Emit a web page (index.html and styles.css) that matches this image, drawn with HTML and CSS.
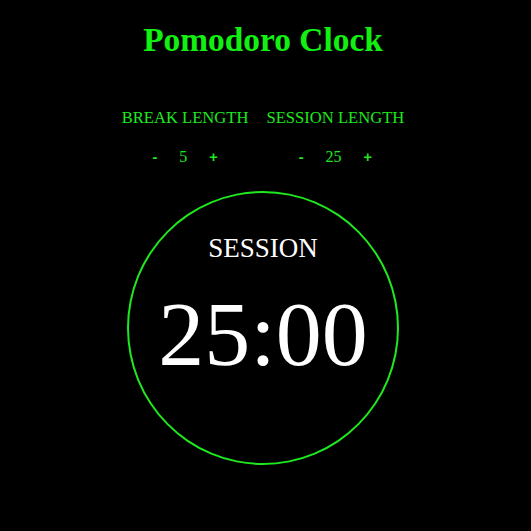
FILE: index.html
```html
<!DOCTYPE html>
<html>
<head>
<meta charset="utf-8">
<link rel="stylesheet" href="styles.css">
</head>
<body>
<div class="app">
  <h1 class="title">Pomodoro Clock</h1>
  <div class="settings">
    <div class="setting">
      <div class="label">BREAK LENGTH</div>
      <div class="controls">
        <button class="btn">-</button>
        <span class="value">5</span>
        <button class="btn">+</button>
      </div>
    </div>
    <div class="setting">
      <div class="label">SESSION LENGTH</div>
      <div class="controls">
        <button class="btn">-</button>
        <span class="value">25</span>
        <button class="btn">+</button>
      </div>
    </div>
  </div>
  <div class="timer">
    <div class="timer-label">SESSION</div>
    <div class="time">25:00</div>
  </div>
</div>
</body>
</html>
```
FILE: styles.css
```css
html, body {
  margin: 0;
  padding: 0;
  background: #000;
  height: 100%;
}
body {
  font-family: "Liberation Serif", "Times New Roman", serif;
  color: #1ee81e;
}
.app {
  display: flex;
  flex-direction: column;
  align-items: center;
  padding-top: 21px;
  padding-right: 5px;
}
.title {
  margin: 0;
  font-size: 33.4px;
  font-weight: bold;
  color: #11f011;
  line-height: 38px;
}
.settings {
  display: flex;
  gap: 18px;
  margin-top: 49px;
}
.setting {
  display: flex;
  flex-direction: column;
  align-items: center;
}
.label {
  font-size: 16.6px;
  line-height: 19px;
}
.controls {
  display: flex;
  align-items: center;
  gap: 22px;
  margin-top: 22px;
}
.btn {
  background: none;
  border: none;
  padding: 0;
  color: #1ee81e;
  font-family: "Liberation Sans", Arial, sans-serif;
  font-weight: bold;
  font-size: 14.5px;
  line-height: 16px;
}
.value {
  font-size: 16px;
  line-height: 16px;
}
.timer {
  margin-top: 26px;
  width: 268px;
  height: 270px;
  border: 2px solid #1ee81e;
  border-radius: 50%;
  display: flex;
  flex-direction: column;
  align-items: center;
  color: #fff;
}
.timer-label {
  margin-top: 40px;
  font-size: 27px;
  line-height: 30px;
}
.time {
  margin-top: 21px;
  font-size: 92px;
  line-height: 100px;
}
```
